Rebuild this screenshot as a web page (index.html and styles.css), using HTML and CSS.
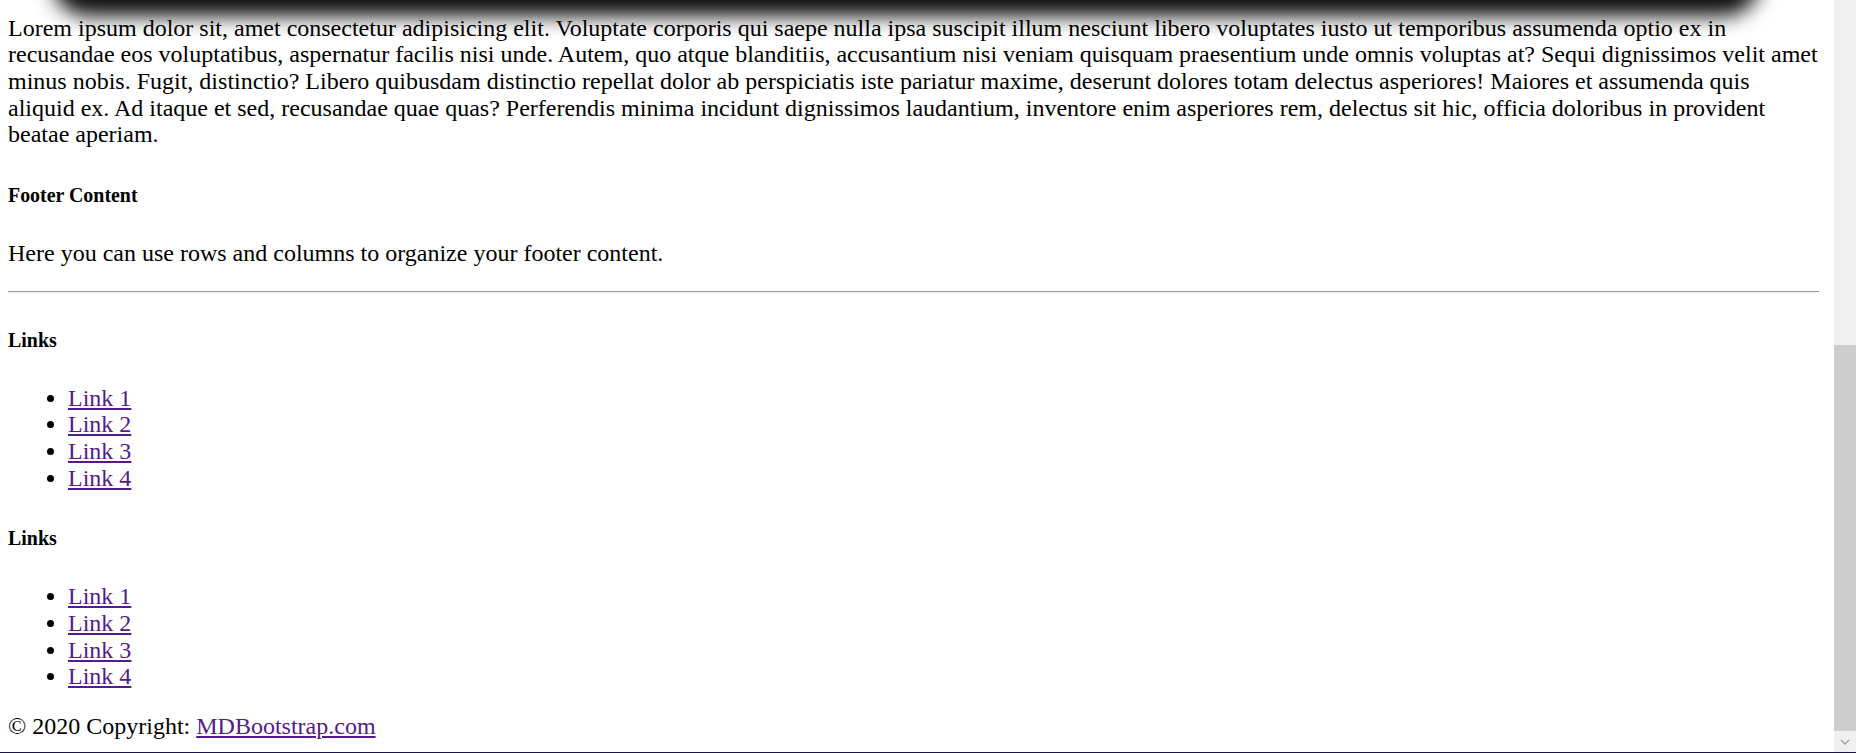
FILE: index.html
```html
<!DOCTYPE html>
<html lang="en">
<head>
<meta charset="utf-8">
<title>Footer</title>
<link rel="stylesheet" href="styles.css">
</head>
<body>
<div class="window">
  <div class="frame">
    <div class="page">
      <div class="top-shadow"></div>
      <p class="lead">Lorem ipsum dolor sit, amet consectetur adipisicing elit. Voluptate corporis qui saepe nulla ipsa suscipit illum nesciunt libero voluptates iusto ut temporibus assumenda optio ex in recusandae eos voluptatibus, aspernatur facilis nisi unde. Autem, quo atque blanditiis, accusantium nisi veniam quisquam praesentium unde omnis voluptas at? Sequi dignissimos velit amet minus nobis. Fugit, distinctio? Libero quibusdam distinctio repellat dolor ab perspiciatis iste pariatur maxime, deserunt dolores totam delectus asperiores! Maiores et assumenda quis aliquid ex. Ad itaque et sed, recusandae quae quas? Perferendis minima incidunt dignissimos laudantium, inventore enim asperiores rem, delectus sit hic, officia doloribus in provident beatae aperiam.</p>
      <footer class="footer">
        <h5 class="title">Footer Content</h5>
        <p class="text">Here you can use rows and columns to organize your footer content.</p>
        <hr class="rule">
        <h5 class="title">Links</h5>
        <ul class="links">
          <li><a href="#!">Link 1</a></li>
          <li><a href="#!">Link 2</a></li>
          <li><a href="#!">Link 3</a></li>
          <li><a href="#!">Link 4</a></li>
        </ul>
        <h5 class="title">Links</h5>
        <ul class="links">
          <li><a href="#!">Link 1</a></li>
          <li><a href="#!">Link 2</a></li>
          <li><a href="#!">Link 3</a></li>
          <li><a href="#!">Link 4</a></li>
        </ul>
        <p class="copyright">© 2020 Copyright: <a href="#!">MDBootstrap.com</a></p>
      </footer>
    </div>
    <div class="scrollbar">
      <div class="track"></div>
      <div class="thumb"></div>
      <div class="arrow">
        <svg width="10" height="6" viewBox="0 0 10 6"><path d="M1 1 L5 5 L9 1" fill="none" stroke="#a8a8a8" stroke-width="1.6"/></svg>
      </div>
    </div>
  </div>
  <div class="edge"></div>
</div>
</body>
</html>
```
FILE: styles.css
```css
html, body {
  margin: 0;
  padding: 0;
  overflow: hidden;
  background: #ffffff;
}

.window {
  display: flex;
  flex-direction: column;
  width: 1856px;
  height: 753px;
}

.frame {
  display: flex;
  flex: 1;
  min-height: 0;
}

.page {
  position: relative;
  flex: 1;
  min-width: 0;
  padding: 14.5px 15.5px 0 8px;
  overflow: hidden;
  font-family: "Liberation Serif", "Times New Roman", serif;
  font-size: 24px;
  line-height: 26.7px;
  color: #000000;
}

.top-shadow {
  position: absolute;
  top: -60px;
  left: 68px;
  right: 90px;
  height: 60px;
  background: #000000;
  border-radius: 20px;
  box-shadow: 0 0 20px 16px rgba(0, 0, 0, 0.95);
}

.lead {
  margin: 0;
}

.title {
  font-size: 19.92px;
  line-height: 22.2px;
  font-weight: bold;
  margin: 35.7px 0 33.9px;
}

.text {
  margin: 0 0 24.5px;
}

.rule {
  margin: 0;
  border: 0;
  border-top: 1px solid #9a9a9a;
  border-bottom: 1px solid #eeeeee;
  height: 0;
}

.links {
  margin: 0 0 23px;
  padding-left: 60px;
}

.links a,
.copyright a {
  color: #551a8b;
  text-decoration: underline;
}

.copyright {
  margin: 23px 0 0;
}

.scrollbar {
  position: relative;
  width: 22px;
  flex: none;
  display: flex;
  flex-direction: column;
  background: #f0f0f0;
}

.track {
  height: 345px;
  flex: none;
}

.thumb {
  height: 386px;
  flex: none;
  background: #cdcdcd;
}

.arrow {
  flex: 1;
  display: flex;
  align-items: center;
  justify-content: center;
}

.edge {
  height: 1px;
  flex: none;
  background: #1a1242;
}
```
